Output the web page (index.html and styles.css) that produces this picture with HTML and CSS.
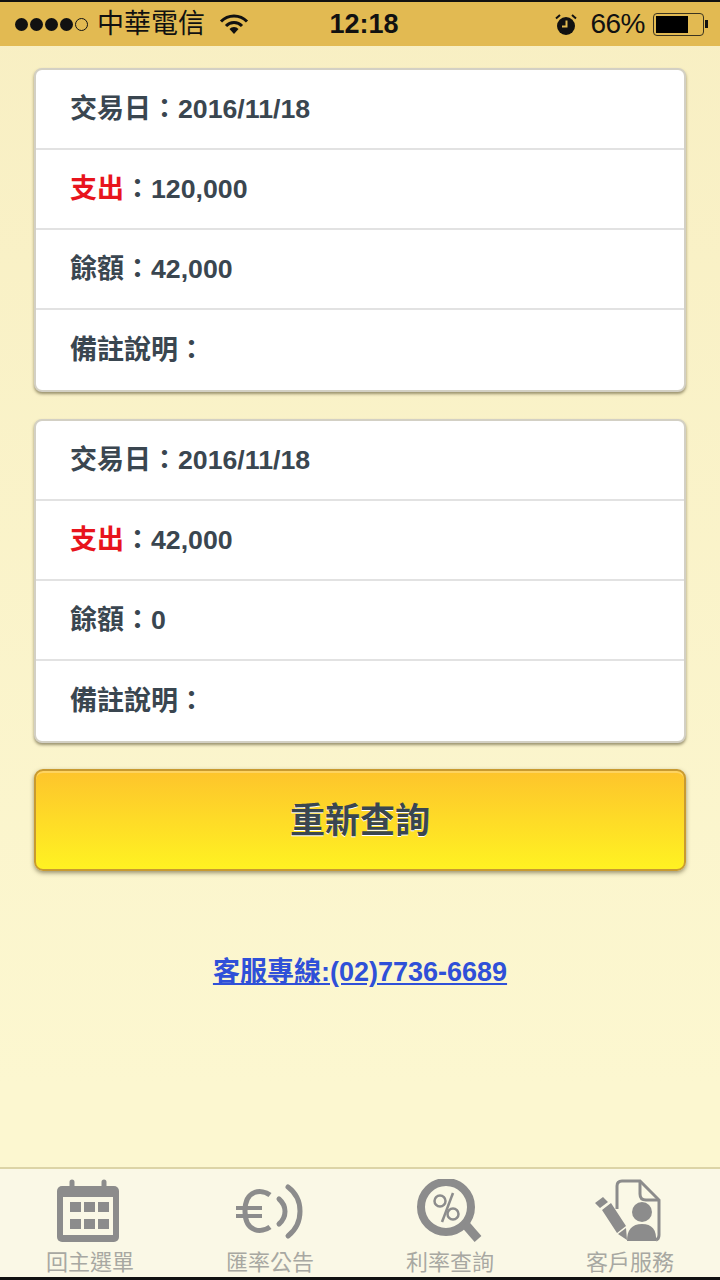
FILE: index.html
```html
<!DOCTYPE html>
<html lang="zh-Hant">
<head>
    <meta charset="UTF-8">
    <meta name="viewport" content="width=device-width, initial-scale=1.0">
    <title>交易明細</title>
    <link rel="stylesheet" href="styles.css">
</head>
<body>
    <div class="page">
        <header class="status-bar">
            <div class="status-left">
                <span class="signal">
                    <i class="dot"></i><i class="dot"></i><i class="dot"></i><i class="dot"></i><i class="dot empty"></i>
                </span>
                <span class="carrier">中華電信</span>
                <svg class="wifi" width="30" height="20" viewBox="0 0 30 20">
                    <path d="M2 7.5a18 18 0 0 1 26 0" fill="none" stroke="#111" stroke-width="3"/>
                    <path d="M7 12a11 11 0 0 1 16 0" fill="none" stroke="#111" stroke-width="3"/>
                    <path d="M10.5 15a6 6 0 0 1 9 0L15 20z" fill="#111"/>
                </svg>
            </div>
            <div class="time">12:18</div>
            <div class="status-right">
                <svg class="alarm" width="22" height="21" viewBox="0 0 22 21">
                    <circle cx="11" cy="12" r="9" fill="#111"/>
                    <path d="M1 4.5 5 1M21 4.5 17 1" stroke="#111" stroke-width="2" fill="none"/>
                    <path d="M11.5 6.5v6H7" stroke="#e2ba52" stroke-width="2" fill="none"/>
                </svg>
                <span class="percent">66%</span>
                <span class="battery"><span class="battery-level"></span></span>
                <span class="battery-nub"></span>
            </div>
        </header>

        <main class="content">
            <section class="card">
                <div class="row"><span class="label">交易日：</span><span class="value">2016/11/18</span></div>
                <div class="row"><span class="label"><span class="expense">支出</span>：</span><span class="value">120,000</span></div>
                <div class="row"><span class="label">餘額：</span><span class="value">42,000</span></div>
                <div class="row"><span class="label">備註說明：</span></div>
            </section>

            <section class="card">
                <div class="row"><span class="label">交易日：</span><span class="value">2016/11/18</span></div>
                <div class="row"><span class="label"><span class="expense">支出</span>：</span><span class="value">42,000</span></div>
                <div class="row"><span class="label">餘額：</span><span class="value">0</span></div>
                <div class="row"><span class="label">備註說明：</span></div>
            </section>

            <button class="retry">重新查詢</button>

            <a class="hotline" href="tel:0277366689">客服專線:(02)7736-6689</a>
        </main>

        <nav class="tabs">
            <a class="tab">
                <svg width="70" height="66" viewBox="0 0 70 66">
                    <path d="M17 9V3M49 9V3" stroke="#8c8c8c" stroke-width="5" stroke-linecap="round"/>
                    <rect x="2" y="7" width="62" height="56" rx="5" fill="#8c8c8c"/>
                    <rect x="8" y="18" width="50" height="38" fill="#faf8e6"/>
                    <path fill="#8c8c8c" d="M15 23h11v10H15zM29 23h11v10H29zM43 23h11v10H43zM15 40h11v10H15zM29 40h11v10H29zM43 40h11v10H43z"/>
                </svg>
                <span class="tab-label">回主選單</span>
            </a>
            <a class="tab">
                <svg width="70" height="66" viewBox="0 0 70 66">
                    <g fill="none" stroke="#8c8c8c" stroke-width="5">
                        <path d="M35 16C27 10 10 10 10 32C10 54 27 54 35 48"/>
                        <path stroke-width="4" d="M1 29h26M1 37h26"/>
                        <path stroke-linecap="round" d="M44 20C52 27 52 38 44 45"/>
                        <path stroke-linecap="round" d="M53 8C69 20 69 44 53 57"/>
                    </g>
                </svg>
                <span class="tab-label">匯率公告</span>
            </a>
            <a class="tab">
                <svg width="70" height="66" viewBox="0 0 70 66">
                    <circle cx="31" cy="28" r="25" fill="none" stroke="#8c8c8c" stroke-width="8"/>
                    <path d="M50 45 63 60" stroke="#8c8c8c" stroke-width="9"/>
                    <g fill="none" stroke="#8c8c8c" stroke-width="2.5">
                        <circle cx="25" cy="22" r="5.5"/>
                        <circle cx="38" cy="35" r="5.5"/>
                        <path d="M38 14 27 43"/>
                    </g>
                </svg>
                <span class="tab-label">利率查詢</span>
            </a>
            <a class="tab">
                <svg width="70" height="66" viewBox="0 0 70 66">
                    <path fill="none" stroke="#8c8c8c" stroke-width="3" d="M22 30V7q0-5 5-5H45L64 21V56q0 4-3 5"/>
                    <path fill="none" stroke="#8c8c8c" stroke-width="3" d="M45 2V15q0 6 6 6H64"/>
                    <circle cx="47" cy="33" r="10" fill="#8c8c8c"/>
                    <path fill="#8c8c8c" d="M32 62q0-17 15-17t14 17z"/>
                    <path fill="#8c8c8c" d="M0 24 8 18 13 23 5 29zM7 31 16 24 31 47 22 54zM23 55 31 49 32 61z"/>
                </svg>
                <span class="tab-label">客戶服務</span>
            </a>
        </nav>
    </div>
</body>
</html>
```

FILE: styles.css
```css
* {
    box-sizing: border-box;
}

body {
    margin: 0;
    font-family: 'Liberation Sans', 'Noto Sans CJK TC', sans-serif;
    color: #3a4650;
}

.page {
    display: flex;
    flex-direction: column;
    height: 1280px;
    background: linear-gradient(180deg, #f8efc3, #fcf7d0 85%);
    border-bottom: 3px solid #111;
}

/* status bar */
.status-bar {
    display: grid;
    grid-template-columns: 1fr auto 1fr;
    align-items: center;
    height: 46px;
    padding: 0 12px 0 15px;
    background-color: #e2ba52;
    border-top: 2px solid #111;
    color: #111;
}

.status-left,
.status-right {
    display: flex;
    align-items: center;
}

.status-right {
    justify-content: flex-end;
}

.signal {
    display: flex;
    gap: 2px;
    margin-right: 9px;
}

.dot {
    width: 13px;
    height: 13px;
    border-radius: 50%;
    background-color: #111;
}

.dot.empty {
    background: none;
    border: 1px solid #111;
}

.carrier {
    font-size: 27px;
    line-height: 32px;
}

.wifi {
    margin-left: 14px;
}

.time {
    margin-left: 5px;
    font-size: 27px;
    font-weight: bold;
}

.percent {
    margin-left: 13px;
    font-size: 28px;
    letter-spacing: -0.5px;
}

.battery {
    display: block;
    width: 51px;
    height: 23px;
    margin-left: 8px;
    padding: 2px;
    border: 1px solid #3b3420;
    border-radius: 4px;
}

.battery-level {
    display: block;
    width: 32px;
    height: 100%;
    background-color: #000;
}

.battery-nub {
    width: 3px;
    height: 8px;
    margin-left: 1px;
    background-color: #111;
}

/* transaction cards */
.content {
    flex: 1;
    display: flex;
    flex-direction: column;
    padding: 22px 34px 0;
}

.card {
    height: 324px;
    margin-bottom: 27px;
    background-color: #fff;
    border: 2px solid #d3d0c4;
    border-radius: 8px;
    box-shadow: 0 2px 3px rgba(60, 50, 20, 0.5);
}

.row {
    display: flex;
    align-items: center;
    height: 80px;
    padding-left: 34px;
    border-bottom: 2px solid #e2e2e2;
    font-size: 27px;
    font-weight: bold;
}

.row:last-child {
    border-bottom: none;
}

/* the CJK font sits low next to the latin digits */
.label {
    padding-bottom: 5px;
}

.value {
    font-size: 26.7px;
}

.expense {
    color: #e8141c;
}

.retry {
    height: 102px;
    margin-top: -1px;
    padding-bottom: 7px;
    background: linear-gradient(180deg, #fdc42c, #fff222);
    border: 2px solid #c89a30;
    border-radius: 9px;
    box-shadow: 0 2px 4px rgba(60, 50, 20, 0.5), inset 0 2px 0 rgba(255, 255, 255, 0.25);
    color: #3a4650;
    font-family: inherit;
    font-size: 35px;
    font-weight: bold;
    text-shadow: 0 1px 0 #fff;
}

.hotline {
    margin-top: 79px;
    align-self: center;
    color: #2f50d8;
    font-size: 27px;
    font-weight: bold;
    text-decoration: underline;
}

/* bottom tabs */
.tabs {
    display: grid;
    grid-template-columns: repeat(4, 1fr);
    height: 110px;
    padding-top: 10px;
    background-color: #faf8e6;
    border-top: 2px solid #dcd4a6;
}

.tab {
    display: flex;
    flex-direction: column;
    align-items: center;
}

.tab-label {
    margin-top: 5px;
    color: #a8a8a2;
    font-size: 22px;
    line-height: 26px;
}
```
